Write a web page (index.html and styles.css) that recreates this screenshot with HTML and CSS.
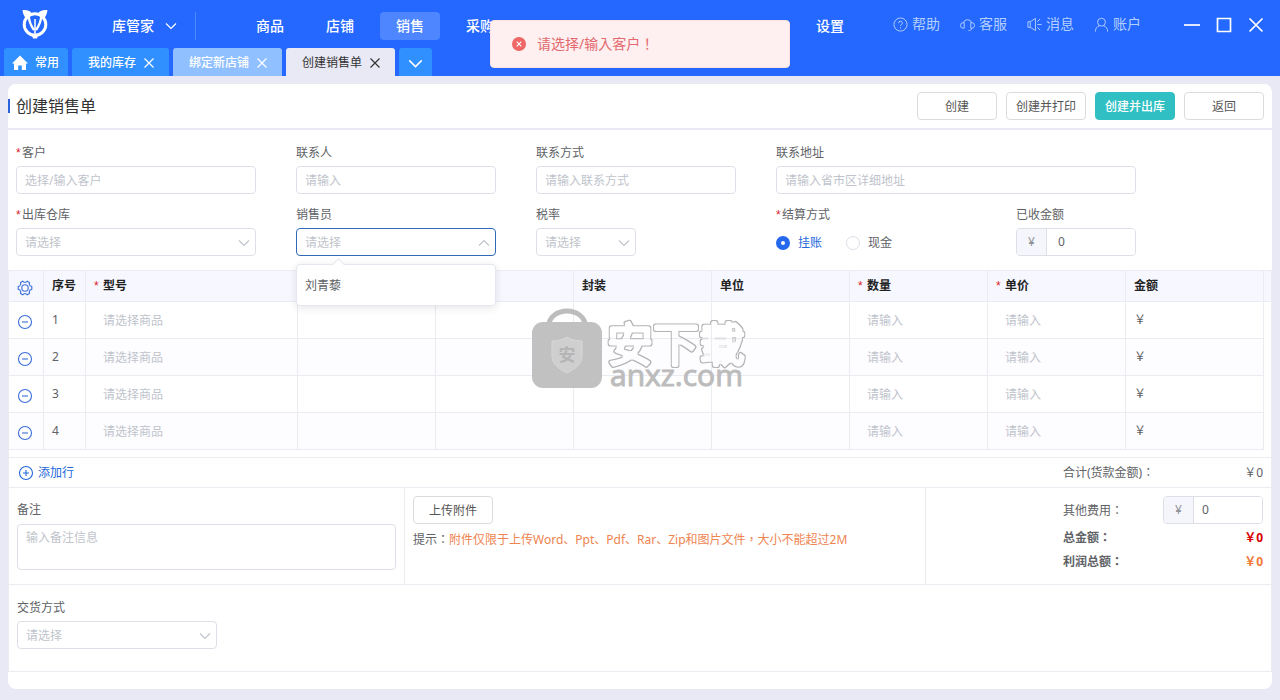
FILE: index.html
```html
<!DOCTYPE html>
<html lang="zh-CN">
<head>
<meta charset="utf-8">
<meta name="viewport" content="width=device-width, initial-scale=1">
<title>创建销售单</title>
<link rel="stylesheet" href="styles.css">
</head>
<body>
<svg class="defs" aria-hidden="true">
  <symbol id="chevron" viewBox="0 0 12 12"><path d="M1 3.5 6 8.5 11 3.5"/></symbol>
  <symbol id="cross" viewBox="0 0 12 12"><path d="M1.5 1.5 10.500 10.500M10.500 1.500 1.500 10.500"/></symbol>
  <symbol id="minus" viewBox="0 0 16 16"><circle cx="8" cy="8" r="6.500"/><path d="M5 8h6"/></symbol>
  <symbol id="plus" viewBox="0 0 16 16"><circle cx="8" cy="8" r="6.500"/><path d="M5 8h6M8 5v6"/></symbol>
</svg>

<header class="header">
  <div class="topbar">
    <svg class="logo" viewBox="0 0 28 30" aria-label="logo">
      <circle cx="14" cy="15.500" r="10.800" fill="none" stroke="#fff" stroke-width="3"/>
      <path fill="#fff" d="M1.500 1c3.500 0 7.500.3 9.500 3.500L4.500 9C3 7 1.800 4 1.500 1zM26.500 1c-3.500 0-7.500.3-9.500 3.500L23.500 9c1.500-2 2.700-5 3-8zM10.500 25h7l-1.500 4.500h-4z"/>
      <path fill="none" stroke="#fff" stroke-width="2.400" d="M7.500 6c.5 6 2.500 11 5.500 15M20.500 6c-.5 6-2.500 11-5.500 15"/>
      <path stroke="#fff" stroke-width="1.500" d="M14 10v16"/>
    </svg>
    <button class="brand" type="button">库管家 <svg class="line-icon"><use href="#chevron"/></svg></button>
    <nav class="nav">
      <a href="#">商品</a>
      <a href="#">店铺</a>
      <a href="#" class="active" aria-current="page">销售</a>
      <a href="#">采购</a>
      <a href="#" class="nav-last">设置</a>
    </nav>
    <div class="tools">
      <a href="#"><svg viewBox="0 0 16 16"><circle cx="8" cy="8" r="7"/><path d="M6 6.500a2 2 0 1 1 3 1.700c-.7.400-1 .7-1 1.500M8 11v1.300"/></svg>帮助</a>
      <a href="#"><svg viewBox="0 0 16 16"><path d="M3.500 6.500a4.600 4.600 0 0 1 9 0M4.500 6v6h-1a3 3 0 0 1 0-6zM11.500 6v6h1a3 3 0 0 0 0-6zM12.500 12c0 1.800-1.500 2.500-3.500 2.500"/></svg>客服</a>
      <a href="#"><svg viewBox="0 0 16 16"><path d="M1 5h2.500v6H1zM3.500 5 9 1.500v13L3.500 11M11 8h4.500M11 5l3-3M11 11l3 3"/></svg>消息</a>
      <a href="#"><svg viewBox="0 0 16 16"><circle cx="8" cy="5.500" r="4.200"/><path d="M1.500 15.500c0-3 1.500-5.500 4.500-6.200M14.500 15.500c0-3-1.500-5.500-4.500-6.200"/></svg>账户</a>
    </div>
    <div class="window-buttons">
      <button type="button" aria-label="最小化"><svg viewBox="0 0 16 16"><path d="M0 8h16"/></svg></button>
      <button type="button" aria-label="最大化"><svg viewBox="0 0 16 16"><path d="M1.500 1.500h13v13h-13z"/></svg></button>
      <button type="button" aria-label="关闭"><svg viewBox="0 0 16 16"><path d="M1.500 1.500l13 13M14.500 1.500l-13 13"/></svg></button>
    </div>
  </div>
  <div class="tabs">
    <button class="tab tab-home" type="button"><svg viewBox="0 0 16 16"><path fill="#fff" d="M8 .5 16 8.500h-2V15H9.800v-4.500H6.200V15H2V8.500H0z"/></svg>常用</button>
    <button class="tab" type="button">我的库存 <svg class="line-icon"><use href="#cross"/></svg></button>
    <button class="tab tab-light" type="button">绑定新店铺 <svg class="line-icon"><use href="#cross"/></svg></button>
    <button class="tab tab-current" type="button">创建销售单 <svg class="line-icon"><use href="#cross"/></svg></button>
    <button class="tab tab-more" type="button" aria-label="更多"><svg class="line-icon"><use href="#chevron"/></svg></button>
  </div>
</header>

<div class="toast" role="alert">
  <svg viewBox="0 0 14 14"><circle cx="7" cy="7" r="7" fill="#ee6666"/><path d="M4.700 4.700l4.600 4.600M9.300 4.700 4.700 9.300" stroke="#fff" stroke-width="1.200"/></svg>
  <span class="mid-punct" lang="zh-TW">请选择/输入客户！</span>
</div>

<main class="card">
  <div class="title-row">
    <h1>创建销售单</h1>
    <div class="actions">
      <button class="btn" type="button">创建</button>
      <button class="btn" type="button">创建并打印</button>
      <button class="btn btn-teal" type="button">创建并出库</button>
      <button class="btn" type="button">返回</button>
    </div>
  </div>

  <form class="fields">
    <div class="field"><label for="customer"><i>*</i>客户</label><input id="customer" class="control" placeholder="选择/输入客户"></div>
    <div class="field"><label for="contact">联系人</label><input id="contact" class="control" placeholder="请输入"></div>
    <div class="field"><label for="phone">联系方式</label><input id="phone" class="control" placeholder="请输入联系方式"></div>
    <div class="field field-wide"><label for="address">联系地址</label><input id="address" class="control" placeholder="请输入省市区详细地址"></div>

    <div class="field"><label for="warehouse"><i>*</i>出库仓库</label>
      <div class="select"><select id="warehouse" class="control"><option>请选择</option></select><svg class="line-icon"><use href="#chevron"/></svg></div></div>
    <div class="field"><label for="seller">销售员</label>
      <div class="select open"><select id="seller" class="control"><option>请选择</option></select><svg class="line-icon"><use href="#chevron"/></svg>
        <ul class="menu"><li>刘青藜</li></ul></div></div>
    <div class="field"><label for="tax">税率</label>
      <div class="select select-short"><select id="tax" class="control"><option>请选择</option></select><svg class="line-icon"><use href="#chevron"/></svg></div></div>
    <div class="field" role="radiogroup" aria-labelledby="settle"><span class="label" id="settle"><i>*</i>结算方式</span>
      <div class="radios">
        <label><input type="radio" name="settle" checked><span>挂账</span></label>
        <label><input type="radio" name="settle"><span>现金</span></label>
      </div></div>
    <div class="field"><label for="received">已收金额</label>
      <div class="money"><span>¥</span><input id="received" value="0"></div></div>
  </form>

  <div class="sheet">
    <table class="items">
      <colgroup><col class="c-tool"><col class="c-no"><col><col class="c-std"><col class="c-std"><col class="c-std"><col class="c-std"><col class="c-std"><col class="c-std"><col class="c-std"><col class="c-end"></colgroup>
      <thead><tr>
        <th class="tool"><button type="button" class="icon-btn" aria-label="设置列"><svg viewBox="0 0 16 16"><path d="M5.800 1.200 7 2.300h2l1.200-1.100 2.300 1.300-.3 1.700 1 1.700 1.600.6v2.900l-1.600.6-1 1.700.3 1.700-2.300 1.400L9 13.700H7l-1.200 1.100-2.300-1.400.3-1.700-1-1.700-1.600-.6V6.500l1.600-.6 1-1.700-.3-1.700z"/><circle cx="8" cy="8" r="3.200"/></svg></button></th>
        <th>序号</th><th><i>*</i>型号</th><th></th><th></th><th>封装</th><th>单位</th><th><i>*</i>数量</th><th><i>*</i>单价</th><th>金额</th><th class="end"></th>
      </tr></thead>
      <tbody>
        <tr><td class="tool"><button type="button" class="icon-btn" aria-label="删除行"><svg><use href="#minus"/></svg></button></td><td>1</td><td><input placeholder="请选择商品" aria-label="型号"></td><td></td><td></td><td></td><td></td><td><input placeholder="请输入" aria-label="数量"></td><td><input placeholder="请输入" aria-label="单价"></td><td>￥</td></tr>
        <tr><td class="tool"><button type="button" class="icon-btn" aria-label="删除行"><svg><use href="#minus"/></svg></button></td><td>2</td><td><input placeholder="请选择商品" aria-label="型号"></td><td></td><td></td><td></td><td></td><td><input placeholder="请输入" aria-label="数量"></td><td><input placeholder="请输入" aria-label="单价"></td><td>￥</td></tr>
        <tr><td class="tool"><button type="button" class="icon-btn" aria-label="删除行"><svg><use href="#minus"/></svg></button></td><td>3</td><td><input placeholder="请选择商品" aria-label="型号"></td><td></td><td></td><td></td><td></td><td><input placeholder="请输入" aria-label="数量"></td><td><input placeholder="请输入" aria-label="单价"></td><td>￥</td></tr>
        <tr><td class="tool"><button type="button" class="icon-btn" aria-label="删除行"><svg><use href="#minus"/></svg></button></td><td>4</td><td><input placeholder="请选择商品" aria-label="型号"></td><td></td><td></td><td></td><td></td><td><input placeholder="请输入" aria-label="数量"></td><td><input placeholder="请输入" aria-label="单价"></td><td>￥</td></tr>
      </tbody>
    </table>

    <div class="add-row">
      <button type="button" class="add"><svg><use href="#plus"/></svg>添加行</button>
      <div class="sum"><span class="mid-punct" lang="zh-TW">合计(货款金额)：</span><span>￥0</span></div>
    </div>

    <div class="extras">
      <div class="remark"><label for="remark">备注</label><textarea id="remark" class="control" placeholder="输入备注信息"></textarea></div>
      <div class="upload">
        <button class="btn" type="button">上传附件</button>
        <p><span class="mid-punct" lang="zh-TW">提示：</span><em>附件仅限于上传Word、Ppt、Pdf、Rar、Zip和图片文件<span class="mid-punct" lang="zh-TW">，</span>大小不能超过2M</em></p>
      </div>
      <div class="totals">
        <div class="sum sum-input"><label class="mid-punct" lang="zh-TW" for="fee">其他费用：</label><div class="money"><span>¥</span><input id="fee" value="0"></div></div>
        <div class="sum strong"><span class="mid-punct" lang="zh-TW">总金额：</span><span class="red">￥0</span></div>
        <div class="sum strong"><span class="mid-punct" lang="zh-TW">利润总额：</span><span class="orange">￥0</span></div>
      </div>
    </div>

    <div class="delivery">
      <label for="delivery">交货方式</label>
      <div class="select"><select id="delivery" class="control"><option>请选择</option></select><svg class="line-icon"><use href="#chevron"/></svg></div>
    </div>
  </div>
</main>

<svg class="watermark" viewBox="0 0 216 84">
  <defs><filter id="outline" x="-10%" y="-20%" width="120%" height="140%">
    <feMorphology in="SourceGraphic" operator="erode" radius="1" result="inner"/>
    <feComposite in="SourceGraphic" in2="inner" operator="out"/>
  </filter></defs>
  <path d="M18 17a18 14 0 0 1 36 0" fill="none" stroke="#bdbdbd" stroke-width="5"/>
  <rect x="1" y="14" width="70" height="66" rx="11" fill="#c1c1c1"/>
  <path d="M36 29c5 3 10 4 15 4v15c0 8-7 13-15 17-8-4-15-9-15-17V33c5 0 10-1 15-4z" fill="#cfcfcf" stroke="#d8d8d8"/>
  <text class="wm-shield" x="36" y="53" text-anchor="middle">安</text>
  <text class="wm-cn" x="76" y="53" filter="url(#outline)">安下载</text>
  <text class="wm-en" x="79" y="78">anxz.com</text>
</svg>
</body>
</html>
```

FILE: styles.css
```css
* { box-sizing: border-box; }

body {
  margin: 0;
  min-height: 100vh;
  display: flex;
  flex-direction: column;
  position: relative;
  background: #e9e9f5;
  color: #606266;
  font: 12px/16px "Noto Sans", "Noto Sans CJK SC", sans-serif;
}

button, input, select, textarea { font: inherit; color: inherit; margin: 0; }
button { background: none; border: 0; padding: 0; cursor: pointer; }
a { color: inherit; text-decoration: none; }
i { display: inline-block; width: 6px; color: #d81e28; font-family: "Liberation Sans", sans-serif; font-style: normal; }
.defs { display: none; }
.line-icon { width: 12px; height: 12px; fill: none; stroke: currentColor; stroke-width: 1.2; }
.mid-punct { font-family: "Noto Sans", "Noto Sans CJK TC", sans-serif; }

/* Header */
.header { background: #2468ff; color: #fff; }
.topbar { display: flex; height: 48px; font-size: 14px; line-height: 20px; padding-right: 16px; }
.logo { width: 28px; height: 30px; margin: 9px 0 0 21px; flex: none; }
.brand {
  display: flex; align-items: center; gap: 11px;
  height: 28px; margin: 12px 0 0 63px; padding-right: 18px;
  border-right: 1px solid #4a8bff; white-space: nowrap; font-weight: 500;
}
.nav { display: flex; gap: 10px; margin: 12px 0 0 44px; }
.nav a { width: 60px; height: 28px; line-height: 28px; text-align: center; border-radius: 4px; font-weight: 500; }
.nav .active { background: #4d86ff; }
.nav .nav-last { margin-left: 280px; }
.tools { display: flex; gap: 20px; margin: 14px 0 0 auto; color: #b5d0ff; }
.tools a { display: flex; align-items: center; gap: 4px; height: 20px; white-space: nowrap; }
.tools svg { width: 15px; height: 15px; fill: none; stroke: currentColor; }
.window-buttons { display: flex; gap: 16px; margin: 17px 0 0 43px; height: 16px; }
.window-buttons svg { display: block; width: 16px; height: 16px; fill: none; stroke: #fff; stroke-width: 1.7; }

.tabs { display: flex; gap: 4px; padding-left: 4px; }
.tab {
  display: flex; align-items: center; gap: 7px; height: 28px; padding: 2px 14px 0 16px;
  background: #3090ff; border-radius: 3px 3px 0 0; font-weight: 500; white-space: nowrap;
}
.tab-home { padding: 2px 9px 0 8px; }
.tab-home svg { width: 16px; height: 16px; }
.tab-light { background: #90c0ff; }
.tab-current { background: #e9e9f5; color: #333; font-weight: 400; }
.tab-more { padding: 2px 9px 0; }
.tab-more svg { width: 15px; height: 15px; }

.toast {
  position: absolute; z-index: 3; top: 20px; left: 50%; transform: translateX(-50%);
  display: flex; align-items: center; gap: 11px;
  width: 300px; height: 48px; padding: 0 21px;
  background: #feeff0; border: 1px solid #fde2e2; border-radius: 4px;
  color: #e26a6e; font-size: 14px;
}
.toast svg { width: 14px; height: 14px; }

/* Card */
.card { flex: 1; margin: 8px 8px 11px; background: #fff; border-radius: 8px; }
.title-row {
  display: flex; justify-content: space-between; align-items: center;
  height: 46px; padding-right: 8px; border-bottom: 2px solid #e9e9f5;
}
h1 { margin: 0; padding-left: 6px; border-left: 2px solid #2a62dd; color: #333; font-size: 16px; font-weight: 400; line-height: 14px; }
.actions { display: flex; gap: 9px; }
.btn { width: 80px; height: 28px; padding-top: 2px; border: 1px solid #dcdcdf; border-radius: 4px; background: #fff; color: #555; white-space: nowrap; }
.btn-teal { background: #30c0c4; border-color: #30c0c4; color: #fff; font-weight: 500; }

.fields {
  display: grid; grid-template-columns: 240px 200px 200px 200px 120px; gap: 12px 40px;
  padding: 14px 8px 12px;
}
.field-wide { grid-column: span 2; }
.field > label, .field > .label { display: block; height: 22px; line-height: 18px; }
.control {
  display: block; width: 100%; height: 28px; padding: 0 8px;
  border: 1px solid #dcdfe6; border-radius: 4px; background: #fff; outline: 0;
}
::placeholder { color: #c0c4cc; opacity: 1; }
.select { position: relative; }
.select select { appearance: none; padding-top: 2px; color: #c0c4cc; }
.select > svg { position: absolute; right: 6px; top: 9px; color: #c0c4cc; pointer-events: none; }
.select-short { width: 100px; }
.open select { border-color: #2f6bb5; }
.open > svg { transform: rotate(180deg); }
.menu {
  position: absolute; z-index: 2; top: 36px; left: 0; width: 100%; margin: 0; padding: 7px 0 5px;
  background: #fff; border: 1px solid #e4e7ed; border-radius: 4px; list-style: none;
  box-shadow: 0 2px 8px rgba(0, 0, 0, .1);
}
.menu::before {
  content: ""; position: absolute; top: -5px; left: 37px; width: 8px; height: 8px;
  background: #fff; border: solid #e4e7ed; border-width: 1px 0 0 1px; transform: rotate(45deg);
}
.menu li { padding: 0 8px; line-height: 28px; }

.radios { display: flex; gap: 24px; height: 30px; align-items: center; }
.radios label { display: flex; align-items: center; gap: 8px; }
.radios input { appearance: none; width: 14px; height: 14px; border: 1px solid #dcdfe6; border-radius: 50%; background: #fff; }
.radios input:checked { border: 5px solid #2468ec; }
.radios input:checked + span { color: #2468dc; }

.money { display: flex; height: 28px; border: 1px solid #dcdfe6; border-radius: 4px; overflow: hidden; }
.money span { width: 30px; flex: none; background: #f5f6fb; border-right: 1px solid #dcdfe6; color: #909399; text-align: center; line-height: 26px; }
.money input { flex: 1; min-width: 0; border: 0; padding: 0 11px; outline: 0; }
.money input#fee { padding: 0 8px; }

/* Line items */
.sheet { border: solid #ebebf2; border-width: 0 1px 1px; }
.items { width: 100%; border-collapse: separate; border-spacing: 0; table-layout: fixed; }
.c-tool { width: 35px; }
.c-no { width: 42px; }
.c-std { width: 138px; }
.c-end { width: 7px; }
.items th, .items td { border: solid #ebebf2; border-width: 0 1px 1px 0; padding: 0 8px; text-align: left; height: 37px; }
.items th { height: 32px; border-top-width: 1px; background: #f7f8ff; color: #222; font-weight: 700; }
.items th i { width: 9px; font-weight: 400; }
.items .end { padding: 0; border-right: 0; }
.items .tool { padding: 0 2px 0 0; text-align: center; }
.items tbody tr:nth-child(even) td { background: #fdfcff; }
.items td input { display: block; width: 100%; height: 28px; padding: 0 9px; border: 0; background: none; outline: 0; }
.icon-btn { display: block; margin: 3px auto 0; color: #3a6fd8; }
.icon-btn svg, .add svg { display: block; width: 16px; height: 16px; fill: none; stroke: currentColor; stroke-width: 1.1; }

.add-row {
  display: flex; justify-content: space-between; align-items: center; height: 31px; margin-top: 7px;
  padding: 0 8px 0 9px; border: solid #ebebf2; border-width: 1px 0;
}
.add { display: flex; align-items: center; gap: 4px; color: #2468dc; }
.sum { display: flex; justify-content: space-between; align-items: center; width: 200px; }

.extras { display: flex; border-bottom: 1px solid #ebebf2; }
.remark { width: 396px; padding: 14px 8px; border-right: 1px solid #ebebf2; }
.remark label { display: block; height: 22px; }
.remark textarea { height: 46px; padding: 5px 8px; resize: none; }
.upload { flex: 1; padding: 8px; border-right: 1px solid #ebebf2; }
.upload p { margin: 8px 0 0; }
.upload em { color: #ee8450; font-style: normal; }
.totals { width: 345px; padding: 8px 8px 0 0; display: flex; flex-direction: column; align-items: flex-end; }
.totals .sum { height: 24px; }
.totals .sum-input { height: 30px; align-items: flex-start; line-height: 30px; }
.sum-input .money { width: 100px; }
.strong { font-weight: 700; }
.red { color: #d80000; }
.orange { color: #f07838; }

.delivery { padding: 15px 8px 22px; }
.delivery label { display: block; height: 21px; }
.delivery .select { width: 200px; }

/* Overlay mark */
.watermark { position: absolute; z-index: 1; top: 308px; left: 50%; margin-left: -109px; width: 216px; height: 84px; overflow: visible; pointer-events: none; }
.watermark text { font-family: "Noto Sans CJK SC", sans-serif; }
.watermark .wm-shield { font-size: 17px; fill: #b5b5b5; font-weight: 700; }
.watermark .wm-cn { font-size: 46px; font-weight: 400; fill: #b4b4b4; stroke: #b4b4b4; stroke-width: 5; stroke-linejoin: round; }
.watermark .wm-en { font-family: "Open Sans", sans-serif; font-size: 30px; fill: #bcbcbc; stroke: #bcbcbc; stroke-width: 1; }
```
